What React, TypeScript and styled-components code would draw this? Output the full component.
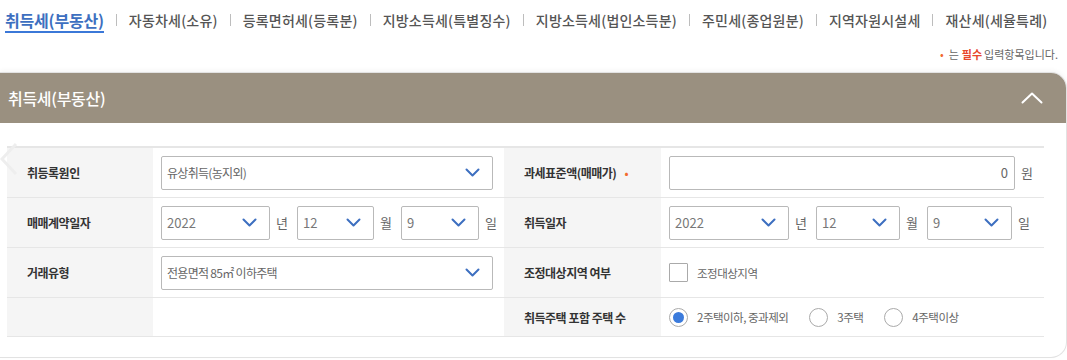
import styled, { createGlobalStyle } from "styled-components";

const GlobalStyle = createGlobalStyle`
  html, body {
    margin: 0;
    padding: 0;
    background: #ffffff;
  }
  body {
    font-family: "Noto Sans CJK KR", "Noto Sans", sans-serif;
    width: 1067px;
    height: 360px;
    overflow: hidden;
  }
`;

const TabBar = styled.nav`
  display: flex;
  align-items: center;
  padding: 6px 0 0 5px;
  height: 30px;
  white-space: nowrap;
`;

const Tab = styled.span<{ $active?: boolean }>`
  font-size: ${(p) => (p.$active ? "16px" : "14px")};
  font-weight: ${(p) => (p.$active ? 700 : 500)};
  color: ${(p) => (p.$active ? "#3d6fc0" : "#555555")};
  letter-spacing: ${(p) => (p.$active ? "-0.2px" : "0.2px")};
  line-height: 21px;
  border-bottom: 2px solid ${(p) => (p.$active ? "#3b78d8" : "transparent")};
`;

const Divider = styled.span`
  width: 1px;
  height: 12px;
  background: #bdbdbd;
  margin: 0 12px 2px;
`;

const Note = styled.div`
  margin-top: 10px;
  padding-right: 9px;
  text-align: right;
  font-size: 11px;
  line-height: 16px;
  letter-spacing: 0;
  color: #666666;
`;

const Dot = styled.span`
  color: #f26a2e;
  margin-right: 5px;
`;

const Required = styled.strong`
  color: #e8472c;
  font-weight: 700;
  margin: 0 2px 0 3px;
`;

const Card = styled.section`
  margin-top: 10px;
  border: 1px solid #e2e2e2;
  border-left: none;
  border-radius: 0 16px 16px 0;
  overflow: hidden;
  background: #ffffff;
  box-shadow: 0 -2px 4px rgba(0, 0, 0, 0.04);
`;

const CardHeader = styled.header`
  height: 50px;
  background: #9a9080;
  display: flex;
  align-items: center;
  justify-content: space-between;
  padding: 0 23px 0 8px;
`;

const CardTitle = styled.h2`
  margin: 0;
  font-size: 16px;
  font-weight: 500;
  letter-spacing: -0.3px;
  color: #ffffff;
`;

const CardBody = styled.div`
  position: relative;
  padding: 23px 22px 20px 7px;
`;

const GhostArrow = styled.svg`
  position: absolute;
  left: 0;
  top: 19px;
`;

const Grid = styled.div`
  display: grid;
  grid-template-columns: 146px 351px 157px 383px;
  border-top: 2px solid #e6e6e6;
`;

const LabelCell = styled.div<{ $short?: boolean }>`
  height: ${(p) => (p.$short ? "38px" : "49px")};
  background: #f5f5f5;
  border-bottom: 1px solid #e6e6e6;
  display: flex;
  align-items: center;
  padding-left: 20px;
  font-size: 12px;
  font-weight: 700;
  letter-spacing: -0.5px;
  color: #333333;
`;

const ValueCell = styled.div<{ $short?: boolean }>`
  height: ${(p) => (p.$short ? "38px" : "49px")};
  border-bottom: 1px solid #e6e6e6;
  display: flex;
  align-items: center;
  padding: 0 11px 0 8px;
`;

const Mark = styled.span`
  color: #f26a2e;
  margin-left: 8px;
  font-weight: 400;
`;

const SelectBox = styled.div<{ $w?: number }>`
  box-sizing: border-box;
  height: 34px;
  width: ${(p) => (p.$w ? `${p.$w}px` : "auto")};
  flex: ${(p) => (p.$w ? "none" : "1")};
  border: 1px solid #b9b9b9;
  border-radius: 2px;
  background: #ffffff;
  display: flex;
  align-items: center;
  justify-content: space-between;
  padding: 0 12px 0 5px;
  font-size: 12px;
  letter-spacing: -0.7px;
  color: #666666;
`;

const Digits = styled.span`
  font-size: 13px;
  letter-spacing: 0;
  color: #777777;
`;

const AmountInput = styled.div`
  box-sizing: border-box;
  flex: 1;
  height: 34px;
  border: 1px solid #b9b9b9;
  border-radius: 2px;
  display: flex;
  align-items: center;
  justify-content: flex-end;
  padding-right: 6px;
  font-size: 13px;
  color: #666666;
`;

const Unit = styled.span<{ $last?: boolean }>`
  font-size: 13px;
  color: #666666;
  margin: 0 ${(p) => (p.$last ? "0" : "9px")} 0 6px;
`;

const CheckBox = styled.span`
  box-sizing: border-box;
  width: 19px;
  height: 19px;
  border: 1px solid #aaaaaa;
  border-radius: 1px;
  background: #ffffff;
`;

const OptionText = styled.span`
  font-size: 11.5px;
  letter-spacing: -0.5px;
  color: #666666;
  margin: 0 21px 0 9px;
`;

const Radio = styled.span<{ $checked?: boolean }>`
  box-sizing: border-box;
  width: 19px;
  height: 19px;
  border-radius: 50%;
  border: 1px solid #aaaaaa;
  background: #ffffff;
  display: flex;
  align-items: center;
  justify-content: center;

  &::after {
    content: "";
    width: 11px;
    height: 11px;
    border-radius: 50%;
    background: ${(p) => (p.$checked ? "#3b7bdc" : "transparent")};
  }
`;

const tabs = [
  "취득세(부동산)",
  "자동차세(소유)",
  "등록면허세(등록분)",
  "지방소득세(특별징수)",
  "지방소득세(법인소득분)",
  "주민세(종업원분)",
  "지역자원시설세",
  "재산세(세율특례)",
];

function Chevron() {
  return (
    <svg width="15" height="9" viewBox="0 0 15 9" fill="none">
      <path
        d="M1.5 1.5 L7.5 7.5 L13.5 1.5"
        stroke="#3d6fc0"
        strokeWidth="2"
        strokeLinecap="round"
        strokeLinejoin="round"
      />
    </svg>
  );
}

function Select({ value, width, digits }: { value: string; width?: number; digits?: boolean }) {
  return (
    <SelectBox $w={width}>
      {digits ? <Digits>{value}</Digits> : <span>{value}</span>}
      <Chevron />
    </SelectBox>
  );
}

function DateFields({ widths }: { widths: number[] }) {
  return (
    <>
      <Select value="2022" width={widths[0]} digits />
      <Unit>년</Unit>
      <Select value="12" width={widths[1]} digits />
      <Unit>월</Unit>
      <Select value="9" width={widths[2]} digits />
      <Unit $last>일</Unit>
    </>
  );
}

export default function App() {
  return (
    <>
      <GlobalStyle />
      <TabBar>
        {tabs.map((t, i) => (
          <span key={t} style={{ display: "contents" }}>
            {i > 0 && <Divider />}
            <Tab $active={i === 0}>{t}</Tab>
          </span>
        ))}
      </TabBar>
      <Note>
        <Dot>•</Dot>는<Required>필수</Required>입력항목입니다.
      </Note>
      <Card>
        <CardHeader>
          <CardTitle>취득세(부동산)</CardTitle>
          <svg width="22" height="12" viewBox="0 0 22 12" fill="none">
            <path
              d="M1.5 10.5 L11 1.5 L20.5 10.5"
              stroke="#ffffff"
              strokeWidth="2"
              strokeLinecap="round"
              strokeLinejoin="round"
            />
          </svg>
        </CardHeader>
        <CardBody>
          <GhostArrow width="18" height="34" viewBox="0 0 18 34" fill="none">
            <path d="M16 2 L2 17 L16 32" stroke="#eeeeee" strokeWidth="3" />
          </GhostArrow>
          <Grid>
            <LabelCell>취등록원인</LabelCell>
            <ValueCell>
              <Select value="유상취득(농지외)" />
            </ValueCell>
            <LabelCell>
              과세표준액(매매가)<Mark>•</Mark>
            </LabelCell>
            <ValueCell>
              <AmountInput>0</AmountInput>
              <Unit $last>원</Unit>
            </ValueCell>

            <LabelCell>매매계약일자</LabelCell>
            <ValueCell>
              <DateFields widths={[109, 77, 78]} />
            </ValueCell>
            <LabelCell>취득일자</LabelCell>
            <ValueCell>
              <DateFields widths={[120, 84, 85]} />
            </ValueCell>

            <LabelCell>거래유형</LabelCell>
            <ValueCell>
              <Select value="전용면적 85㎡ 이하주택" />
            </ValueCell>
            <LabelCell>조정대상지역 여부</LabelCell>
            <ValueCell>
              <CheckBox />
              <OptionText>조정대상지역</OptionText>
            </ValueCell>

            <LabelCell $short />
            <ValueCell $short />
            <LabelCell $short>취득주택 포함 주택 수</LabelCell>
            <ValueCell $short>
              <Radio $checked />
              <OptionText>2주택이하, 중과제외</OptionText>
              <Radio />
              <OptionText>3주택</OptionText>
              <Radio />
              <OptionText>4주택이상</OptionText>
            </ValueCell>
          </Grid>
        </CardBody>
      </Card>
    </>
  );
}
